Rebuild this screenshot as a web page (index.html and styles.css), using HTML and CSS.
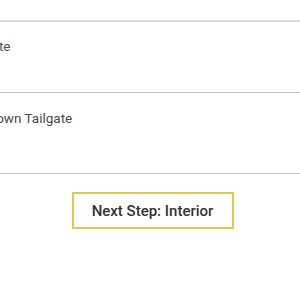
FILE: index.html
```html
<!DOCTYPE html>
<html>
<head>
<meta charset="utf-8">
<link rel="stylesheet" href="styles.css">
</head>
<body>
<div class="page">
  <div class="list">
    <div class="row row-first"><span class="label">Power Liftgate</span></div>
    <div class="row row-second"><span class="label">Power Drop Down Tailgate</span></div>
  </div>
  <div class="actions">
    <button class="next">Next Step: Interior</button>
  </div>
</div>
</body>
</html>
```
FILE: styles.css
```css
html, body {
  margin: 0;
  padding: 0;
  background: #fff;
}
.page {
  width: 300px;
  overflow: hidden;
  padding-top: 20px;
  font-family: Roboto, "Liberation Sans", sans-serif;
}
.list {
  border-top: 2px solid #dcdcdc;
}
.row {
  border-bottom: 1px solid #c4c4c4;
  box-sizing: border-box;
  display: flex;
  align-items: flex-start;
}
.row-first {
  height: 71px;
  padding-top: 16px;
}
.row-second {
  height: 81px;
  padding-top: 17px;
}
.label {
  font-size: 13.5px;
  line-height: 16px;
  color: #4a4a4a;
  white-space: nowrap;
  margin-left: -86px;
}
.row-first .label {
  margin-left: -77px;
}
.actions {
  display: flex;
  justify-content: center;
  padding-top: 18px;
  padding-left: 4px;
}
.next {
  width: 162px;
  height: 37px;
  border: 2px solid #e3c64e;
  background: #fff;
  font-family: Roboto, "Liberation Sans", sans-serif;
  font-weight: 500;
  font-size: 15px;
  color: #333;
  padding: 0;
  margin-left: 1px;
}
```
